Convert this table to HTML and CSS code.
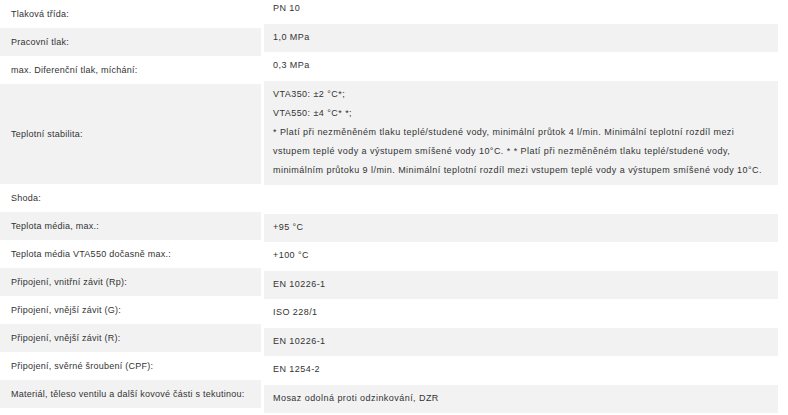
FILE: index.html
```html
<!DOCTYPE html>
<html lang="cs">
<head>
<meta charset="utf-8">
<title>Parametry</title>
<link rel="stylesheet" href="styles.css">
</head>
<body>
<div class="specs">
  <div class="labels">
    <div class="label">Tlaková třída:</div>
    <div class="label alt">Pracovní tlak:</div>
    <div class="label">max. Diferenční tlak, míchání:</div>
    <div class="label alt tall">Teplotní stabilita:</div>
    <div class="label">Shoda:</div>
    <div class="label alt">Teplota média, max.:</div>
    <div class="label">Teplota média VTA550 dočasně max.:</div>
    <div class="label alt">Připojení, vnitřní závit (Rp):</div>
    <div class="label">Připojení, vnější závit (G):</div>
    <div class="label alt">Připojení, vnější závit (R):</div>
    <div class="label">Připojení, svěrné šroubení (CPF):</div>
    <div class="label alt">Materiál, těleso ventilu a další kovové části s tekutinou:</div>
  </div>
  <div class="values">
    <div class="value">PN 10</div>
    <div class="value alt">1,0 MPa</div>
    <div class="value">0,3 MPa</div>
    <div class="value alt">VTA350: ±2 °C*;<br>VTA550: ±4 °C* *;<br>* Platí při nezměněném tlaku teplé/studené vody, minimální průtok 4 l/min. Minimální teplotní rozdíl mezi<br>vstupem teplé vody a výstupem smíšené vody 10°C. * * Platí při nezměněném tlaku teplé/studené vody,<br>minimálním průtoku 9 l/min. Minimální teplotní rozdíl mezi vstupem teplé vody a výstupem smíšené vody 10°C.</div>
    <div class="value">&nbsp;</div>
    <div class="value alt">+95 °C</div>
    <div class="value">+100 °C</div>
    <div class="value alt">EN 10226-1</div>
    <div class="value">ISO 228/1</div>
    <div class="value alt">EN 10226-1</div>
    <div class="value">EN 1254-2</div>
    <div class="value alt">Mosaz odolná proti odzinkování, DZR</div>
  </div>
</div>
</body>
</html>
```
FILE: styles.css
```css
html, body {
  margin: 0;
  padding: 0;
  background: #ffffff;
}
body {
  font-family: "Liberation Sans", Arial, sans-serif;
  font-size: 9px;
  letter-spacing: 0.25px;
  color: #333333;
  overflow: hidden;
}
.specs {
  display: flex;
  align-items: flex-start;
  gap: 3px;
  width: 778px;
}
.labels {
  width: 261px;
  flex: none;
  display: flex;
  flex-direction: column;
}
.label {
  height: 28px;
  display: flex;
  align-items: center;
  padding-left: 11px;
  box-sizing: border-box;
  white-space: nowrap;
}
.label.tall {
  height: 100px;
}
.values {
  flex: 1;
  min-width: 0;
  margin-top: -5px;
  display: flex;
  flex-direction: column;
}
.value {
  padding: 4px 0 5.5px 9px;
  line-height: 19px;
  letter-spacing: 0.45px;
  white-space: nowrap;
  overflow: hidden;
}
.alt {
  background: #f2f2f2;
}
```
